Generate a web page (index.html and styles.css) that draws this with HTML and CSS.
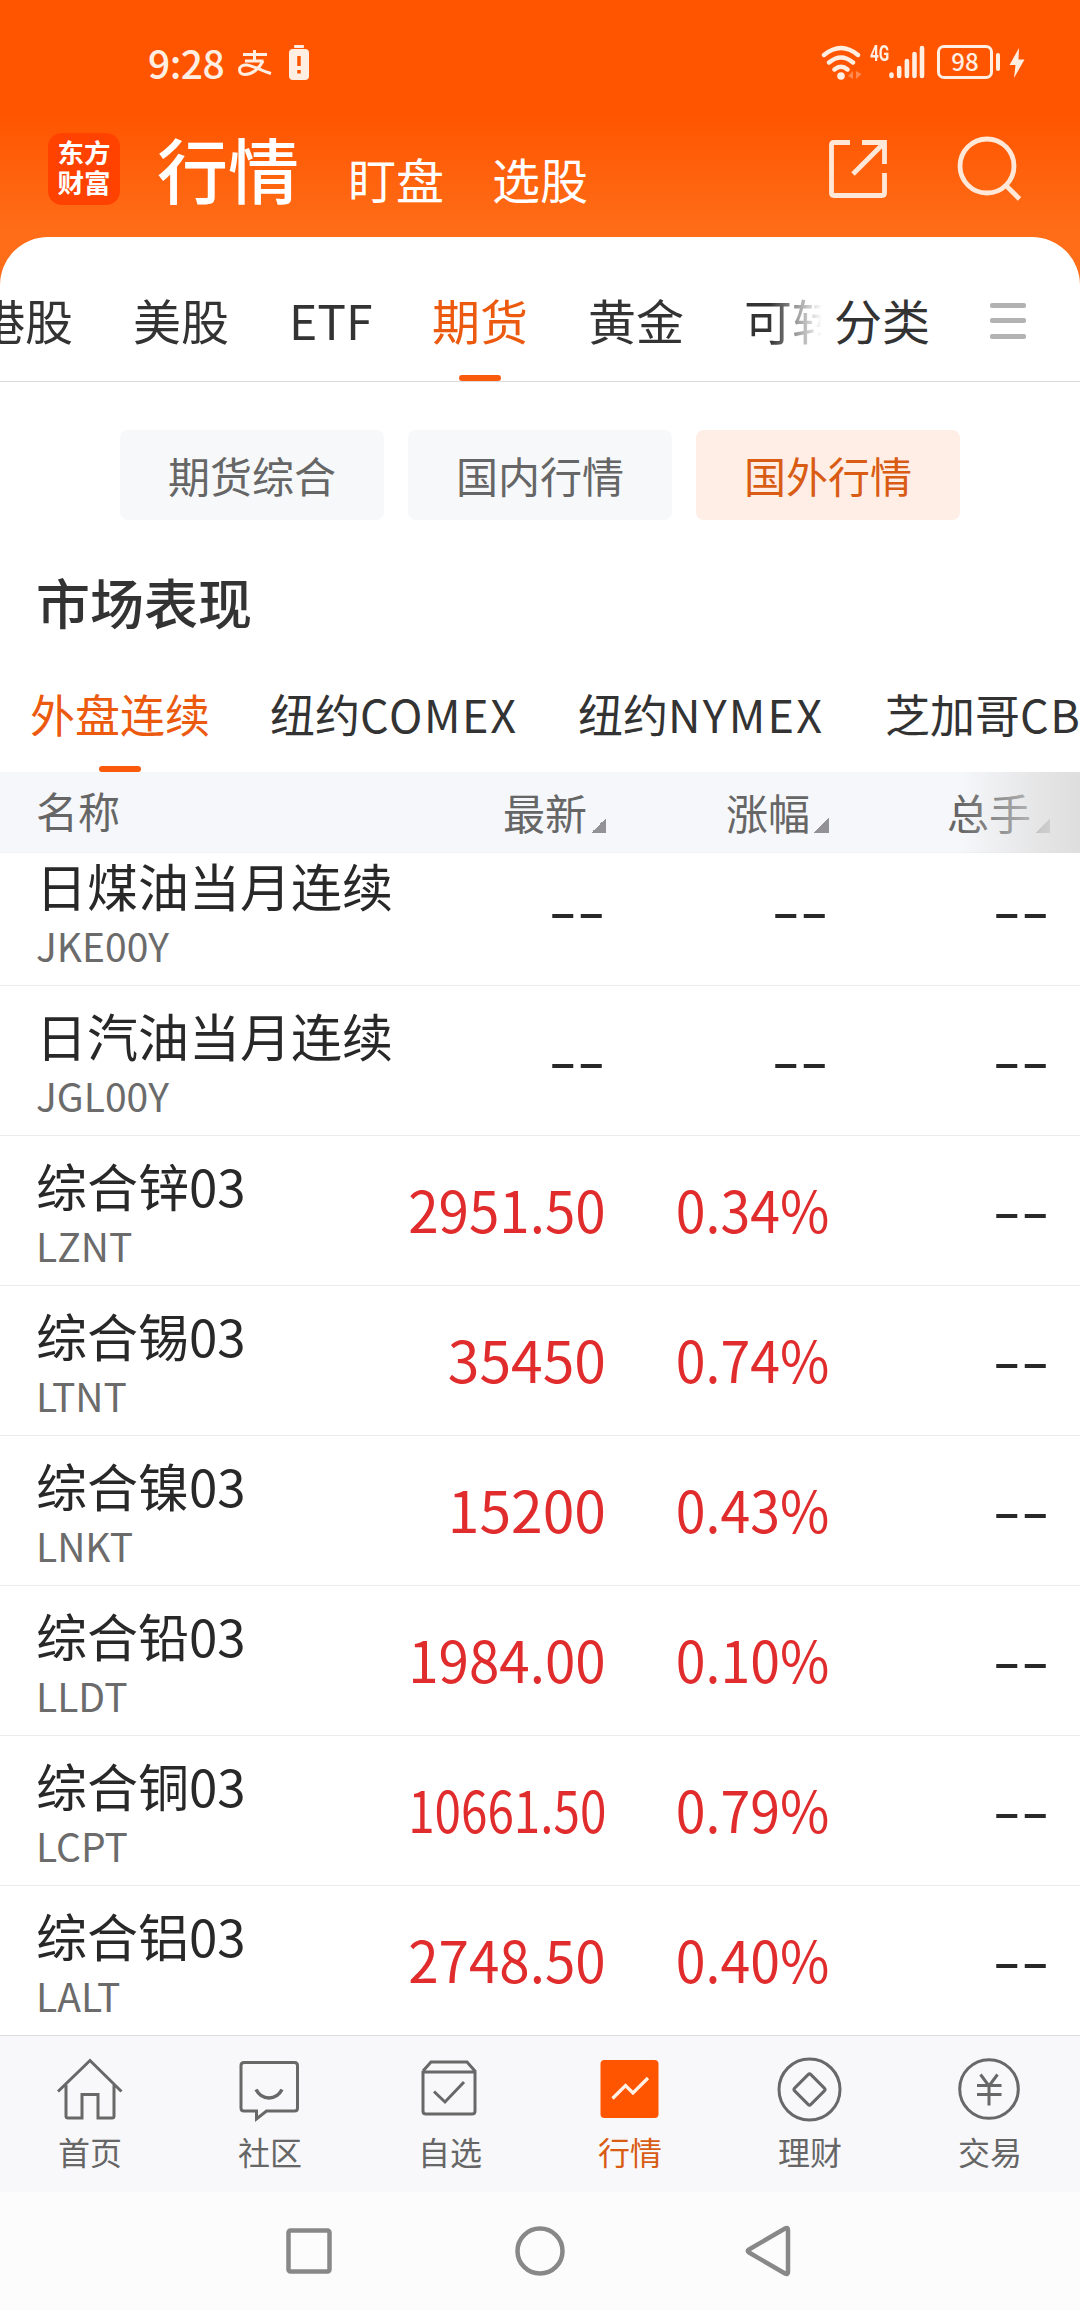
FILE: index.html
```html
<!DOCTYPE html>
<html lang="zh-CN">
<head>
    <meta charset="UTF-8">
    <meta name="viewport" content="width=device-width, initial-scale=1.0">
    <title>行情</title>
    <link rel="stylesheet" href="styles.css">
</head>
<body>
    <div class="app">
        <header class="header">
            <div class="status-bar">
                <span class="time">9:28</span>
                <svg class="alipay" width="34" height="28" viewBox="0 0 34 28" fill="none" stroke="#ffeee2" stroke-width="3">
                    <path d="M5 5.500H29M7 12H25.500M16.500 1V12"/>
                    <path d="M25 12C21 20 14 25.500 7 25.500C2.500 25.500 1.500 22.500 1.500 20.500C1.500 17.500 5 15.500 9 16C16 17 24 22 33 24.500"/>
                </svg>
                <svg class="low-battery" width="20" height="36" viewBox="0 0 20 36">
                    <rect x="5" y="0" width="10" height="3" rx="1" fill="#ffeee2"/>
                    <rect x="0" y="4" width="20" height="31" rx="4" fill="#ffeee2"/>
                    <path d="M10 11V21M10 25V28.500" stroke="#ff5500" stroke-width="3.500"/>
                </svg>
                <div class="status-right">
                    <svg class="wifi" width="42" height="36" viewBox="0 0 42 36" fill="none" stroke="#ffeee2" stroke-width="4.400" stroke-linecap="round">
                        <path d="M3 10Q20 -4 37 10M8 17.500Q20 7.500 32 17.500M13.500 24.500Q20 19 26.500 24.500"/>
                        <circle cx="20" cy="31" r="3.800" fill="#ffeee2" stroke="none"/>
                        <path d="M32 26V34L27 31ZM35 26V34L40.500 29Z" fill="#ff8a50" stroke="none"/>
                    </svg>
                    <span class="network">4G</span>
                    <svg class="signal" width="36" height="34" viewBox="0 0 36 34" stroke="#ffeee2" stroke-width="4.600" stroke-linecap="round">
                        <path d="M2.500 29.500V31M10.200 23V31M17.900 16V31M25.500 9V31M33 3V31"/>
                    </svg>
                    <span class="battery">98</span>
                    <span class="battery-cap"></span>
                    <svg class="bolt" width="16" height="30" viewBox="0 0 16 30"><path d="M10 0L0.500 17H6.500L5 30L15.500 11.500H9.500Z" fill="#ffeee2"/></svg>
                </div>
            </div>
            <div class="title-bar">
                <div class="logo">东方<br>财富</div>
                <h1>行情</h1>
                <span class="title-link">盯盘</span>
                <span class="title-link">选股</span>
                <div class="title-icons">
                    <svg class="share" width="60" height="60" viewBox="0 0 60 60" fill="none" stroke="#ffe8d8" stroke-width="4.800">
                        <path d="M22 3.500H6Q3.500 3.500 3.500 6V54Q3.500 56.500 6 56.500H54Q56.500 56.500 56.500 54V34M34 3.500H56.500V25M55.500 4.500L25 35"/>
                    </svg>
                    <svg width="66" height="66" viewBox="0 0 66 66" fill="none" stroke="#ffe8d8" stroke-width="4.800">
                        <circle cx="30" cy="31" r="27"/>
                        <path d="M49 50.500L62.500 64"/>
                    </svg>
                </div>
            </div>
        </header>

        <main class="panel">
            <nav class="tabs">
                <div class="tabs-scroll">
                    <span class="tab">港股</span>
                    <span class="tab">美股</span>
                    <span class="tab tab-etf">ETF</span>
                    <span class="tab active">期货</span>
                    <span class="tab">黄金</span>
                    <span class="tab">可转债</span>
                </div>
                <span class="tab">分类</span>
                <div class="menu"><i></i><i></i><i></i></div>
            </nav>

            <div class="chips">
                <span class="chip">期货综合</span>
                <span class="chip">国内行情</span>
                <span class="chip active">国外行情</span>
            </div>

            <h2>市场表现</h2>

            <nav class="markets">
                <span class="market active">外盘连续</span>
                <span class="market comex">纽约<b>COMEX</b></span>
                <span class="market nymex">纽约<b>NYMEX</b></span>
                <span class="market">芝加哥<b>CBOT</b></span>
            </nav>

            <div class="row-head">
                <span>名称</span>
                <span class="sort">最新</span>
                <span class="sort">涨幅</span>
                <span class="sort">总手</span>
            </div>

            <div class="list">
                <div class="row">
                    <div><div class="name">日煤油当月连续</div><div class="code">JKE00Y</div></div>
                    <span class="none">--</span><span class="none">--</span><span class="none">--</span>
                </div>
                <div class="row">
                    <div><div class="name">日汽油当月连续</div><div class="code">JGL00Y</div></div>
                    <span class="none">--</span><span class="none">--</span><span class="none">--</span>
                </div>
                <div class="row">
                    <div><div class="name">综合锌03</div><div class="code">LZNT</div></div>
                    <span class="num fit">2951.50</span><span class="num pct">0.34%</span><span class="none">--</span>
                </div>
                <div class="row">
                    <div><div class="name">综合锡03</div><div class="code">LTNT</div></div>
                    <span class="num">35450</span><span class="num pct">0.74%</span><span class="none">--</span>
                </div>
                <div class="row">
                    <div><div class="name">综合镍03</div><div class="code">LNKT</div></div>
                    <span class="num">15200</span><span class="num pct">0.43%</span><span class="none">--</span>
                </div>
                <div class="row">
                    <div><div class="name">综合铅03</div><div class="code">LLDT</div></div>
                    <span class="num fit">1984.00</span><span class="num pct">0.10%</span><span class="none">--</span>
                </div>
                <div class="row">
                    <div><div class="name">综合铜03</div><div class="code">LCPT</div></div>
                    <span class="num fit-long">10661.50</span><span class="num pct">0.79%</span><span class="none">--</span>
                </div>
                <div class="row">
                    <div><div class="name">综合铝03</div><div class="code">LALT</div></div>
                    <span class="num fit">2748.50</span><span class="num pct">0.40%</span><span class="none">--</span>
                </div>
            </div>
        </main>

        <nav class="tabbar">
            <div class="item">
                <svg width="72" height="66" viewBox="0 0 72 66">
                    <path d="M4 34.500L36 3.500L67.500 34.500M12 28V59Q12 61 14 61H28V37.500H44V61H58Q60 61 60 59V28"/>
                </svg>
                <span>首页</span>
            </div>
            <div class="item">
                <svg width="72" height="66" viewBox="0 0 72 66">
                    <path d="M10 5.500H60.500Q63.500 5.500 63.500 8.500V51Q63.500 54 60.500 54H32.500L22.500 62V54H10Q7 54 7 51V8.500Q7 5.500 10 5.500Z"/>
                    <path d="M22 32.500Q26.500 41 35 41Q43.500 41 48 32.500" stroke-width="3.500"/>
                </svg>
                <span>社区</span>
            </div>
            <div class="item">
                <svg width="72" height="66" viewBox="0 0 72 66">
                    <path d="M9 14V54Q9 57 12 57H58Q61 57 61 54V14L53 5H17L9 14M9 15H61M20 34.500L31 45L50 25"/>
                </svg>
                <span>自选</span>
            </div>
            <div class="item active">
                <svg width="72" height="66" viewBox="0 0 72 66">
                    <rect x="6.500" y="3" width="58" height="58" rx="4" fill="#ff5500" stroke="none"/>
                    <path d="M18.500 41.500L31.500 28.500L39 36L54 21" stroke="#fff0e6" stroke-width="3.300"/>
                </svg>
                <span>行情</span>
            </div>
            <div class="item">
                <svg width="72" height="66" viewBox="0 0 72 66">
                    <circle cx="35.500" cy="32.500" r="30.500"/>
                    <rect x="24" y="21" width="23" height="23" rx="2" transform="rotate(45 35.500 32.500)"/>
                </svg>
                <span>理财</span>
            </div>
            <div class="item">
                <svg width="72" height="66" viewBox="0 0 72 66">
                    <circle cx="35" cy="32" r="29.300"/>
                    <path d="M26.500 17.500L35 29L43.500 17.500M23 28.500H47.500M23 37.500H47.500M35 28V48.500"/>
                </svg>
                <span>交易</span>
            </div>
        </nav>

        <div class="sys-nav">
            <svg width="56" height="56" viewBox="0 0 56 56"><rect x="7.500" y="7.500" width="41" height="41" rx="2"/></svg>
            <svg width="56" height="56" viewBox="0 0 56 56"><circle cx="28" cy="28" r="22.500"/></svg>
            <svg width="56" height="56" viewBox="0 0 56 56"><path d="M6 26.500L42 5.500Q45 4 45 7V49Q45 52 42 50.500L6 29.500Q3.500 28 6 26.500Z"/></svg>
        </div>
    </div>
</body>
</html>
```

FILE: styles.css
```css
* {
    box-sizing: border-box;
}
body {
    margin: 0;
    font-family: "Noto Sans CJK SC", "Noto Sans", sans-serif;
    color: #333;
    background-color: #fff;
}
svg {
    display: block;
    flex-shrink: 0;
}
.app {
    width: 1080px;
    height: 2310px;
    display: flex;
    flex-direction: column;
    overflow: hidden;
    background: linear-gradient(#ff5500 0, #ff5500 115px, #ff6d18 230px, #ff6d18 300px);
}

/* status bar + title */
.header {
    height: 237px;
    color: #fff;
}
.status-bar {
    height: 120px;
    padding: 45px 55px 0 148px;
    display: flex;
    align-items: flex-start;
    color: #ffeee2;
}
.time {
    width: 90px;
    font-size: 39px;
    font-weight: 500;
    line-height: 34px;
    letter-spacing: -0.5px;
    white-space: nowrap;
}
.alipay {
    margin-top: 4px;
}
.low-battery {
    margin-left: 17px;
}
.status-right {
    margin-left: auto;
    display: flex;
    align-items: flex-start;
}
.network {
    width: 19px;
    margin-left: 7px;
    font-family: Roboto, sans-serif;
    font-size: 22px;
    font-weight: 700;
    line-height: 18px;
    transform: scaleX(0.7);
    transform-origin: left;
}
.battery {
    width: 56px;
    height: 34px;
    margin-left: 12px;
    border: 3.5px solid #ffeee2;
    border-radius: 7px;
    font-size: 24px;
    font-weight: 500;
    line-height: 26px;
    text-align: center;
}
.battery-cap {
    width: 4px;
    height: 18px;
    margin: 8px 9px 0 3px;
    border-radius: 2px;
    background-color: #ffeee2;
}
.bolt {
    margin-top: 3px;
}
.title-bar {
    height: 117px;
    padding: 0 57px 0 48px;
    display: flex;
    align-items: flex-start;
}
.logo {
    width: 72px;
    height: 72px;
    margin-top: 13px;
    padding-top: 4px;
    border-radius: 14px;
    background-color: #ff4200;
    font-size: 26.5px;
    font-weight: 700;
    line-height: 30px;
    text-align: center;
}
h1 {
    margin: 0 0 0 37px;
    font-size: 71px;
    font-weight: 500;
    line-height: 94px;
}
.title-link {
    margin-left: 48px;
    font-size: 48px;
    line-height: 116px;
}
h1 + .title-link {
    margin-left: 49px;
}
.title-icons {
    margin: 15px 0 0 auto;
    display: flex;
    gap: 69px;
}
.share {
    margin-top: 4px;
}

/* white panel */
.panel {
    flex: 1;
    min-height: 0;
    display: flex;
    flex-direction: column;
    background-color: #fff;
    border-radius: 48px 48px 0 0;
    overflow: hidden;
}
.tabs {
    height: 145px;
    display: flex;
    align-items: flex-end;
    border-bottom: 1px solid #dcdcdc;
}
.tabs-scroll {
    width: 822px;
    margin-right: 12px;
    display: flex;
    gap: 60px;
    overflow: hidden;
    -webkit-mask-image: linear-gradient(to right, #000 770px, transparent 822px);
    mask-image: linear-gradient(to right, #000 770px, transparent 822px);
}
.tabs-scroll .tab:first-child {
    margin-left: -23px;
}
.tab {
    height: 98px;
    flex-shrink: 0;
    font-size: 48px;
    line-height: 73px;
    white-space: nowrap;
}
.tab-etf {
    width: 83px;
}
.tab.active,
.market.active {
    color: #ec5a10;
    display: flex;
    flex-direction: column;
    align-items: center;
    justify-content: space-between;
}
.tab.active::after,
.market.active::after {
    content: "";
    width: 42px;
    height: 6px;
    border-radius: 3px;
    background-color: #f95a0c;
}
.menu {
    width: 36px;
    height: 36px;
    margin: 0 0 42px 60px;
    display: flex;
    flex-direction: column;
    justify-content: space-between;
}
.menu i {
    height: 5px;
    border-radius: 2px;
    background-color: #b2b2b2;
}
.chips {
    margin-top: 48px;
    display: flex;
    justify-content: center;
    gap: 24px;
}
.chip {
    width: 264px;
    height: 90px;
    border-radius: 8px;
    background-color: #f7f8fa;
    color: #666;
    font-size: 42px;
    line-height: 89px;
    text-align: center;
}
.chip.active {
    background-color: #ffeee5;
    color: #d95c14;
}
h2 {
    margin: 42px 0 0 36px;
    font-size: 54px;
    font-weight: 500;
    line-height: 80px;
}
.markets {
    height: 130px;
    padding-left: 30px;
    display: flex;
    align-items: flex-end;
    gap: 60px;
    white-space: nowrap;
}
.market {
    height: 91px;
    flex-shrink: 0;
    font-size: 45px;
    line-height: 66px;
}
.market b {
    font-weight: 400;
    letter-spacing: 1.6px;
}
.comex {
    width: 248px;
}
.nymex {
    width: 247px;
}
.nymex b {
    letter-spacing: 2.2px;
}

/* quotes table */
.row-head,
.row {
    display: grid;
    grid-template-columns: 371px 199px 223px 221px;
    padding: 0 30px 0 36px;
}
.row-head {
    position: relative;
    height: 81px;
    flex-shrink: 0;
    background-color: #f6f7fa;
    border-bottom: 1px solid #f1f2f4;
    color: #666;
    font-size: 42px;
    line-height: 75px;
}
.row-head::after {
    content: "";
    position: absolute;
    top: 0;
    right: 0;
    width: 120px;
    height: 81px;
    background: linear-gradient(to right, rgba(222, 222, 222, 0), rgba(222, 222, 222, 0.7) 65%, #dedede);
}
.sort {
    display: flex;
    justify-content: flex-end;
    line-height: 79px;
}
.sort::after {
    content: "";
    width: 15px;
    height: 15px;
    margin: 46px 0 0 4px;
    background: linear-gradient(to bottom right, transparent 50%, #929297 50%);
}
.list {
    overflow: hidden;
}
.row {
    height: 150px;
    border-bottom: 1px solid #ebebeb;
}
.row:first-child {
    margin-top: -17px;
}
.row:last-child {
    border-bottom: none;
}
.name {
    margin-top: 19px;
    color: #282828;
    font-size: 51px;
    line-height: 60px;
    white-space: nowrap;
}
.code {
    margin-top: 7px;
    color: #6b6b6b;
    font-size: 39px;
    line-height: 46px;
}
.num,
.none {
    justify-self: end;
    font-size: 57px;
    line-height: 143px;
    transform-origin: right;
}
.num {
    color: #e02c2c;
    line-height: 145px;
}
.none {
    color: #282828;
    transform: scaleX(1.44);
}
.fit {
    transform: scaleX(0.96);
}
.fit-long {
    transform: scaleX(0.835);
}
.pct {
    transform: scaleX(0.94);
}

/* bottom tabs */
.tabbar {
    height: 157px;
    flex-shrink: 0;
    display: flex;
    border-top: 1px solid #dedede;
    background-color: #f8f8fa;
}
.item {
    flex: 1;
    padding-top: 21px;
    display: flex;
    flex-direction: column;
    align-items: center;
    color: #666;
    font-size: 32px;
    line-height: 46px;
}
.item svg {
    margin-bottom: 5px;
    fill: none;
    stroke: #686868;
    stroke-width: 3;
}
.item.active {
    color: #d95c14;
}
.sys-nav {
    height: 118px;
    flex-shrink: 0;
    padding: 31px 281px 0;
    display: flex;
    justify-content: space-between;
    background-color: #fcfcfc;
}
.sys-nav svg {
    fill: none;
    stroke: #888;
    stroke-width: 4.5;
}
```
